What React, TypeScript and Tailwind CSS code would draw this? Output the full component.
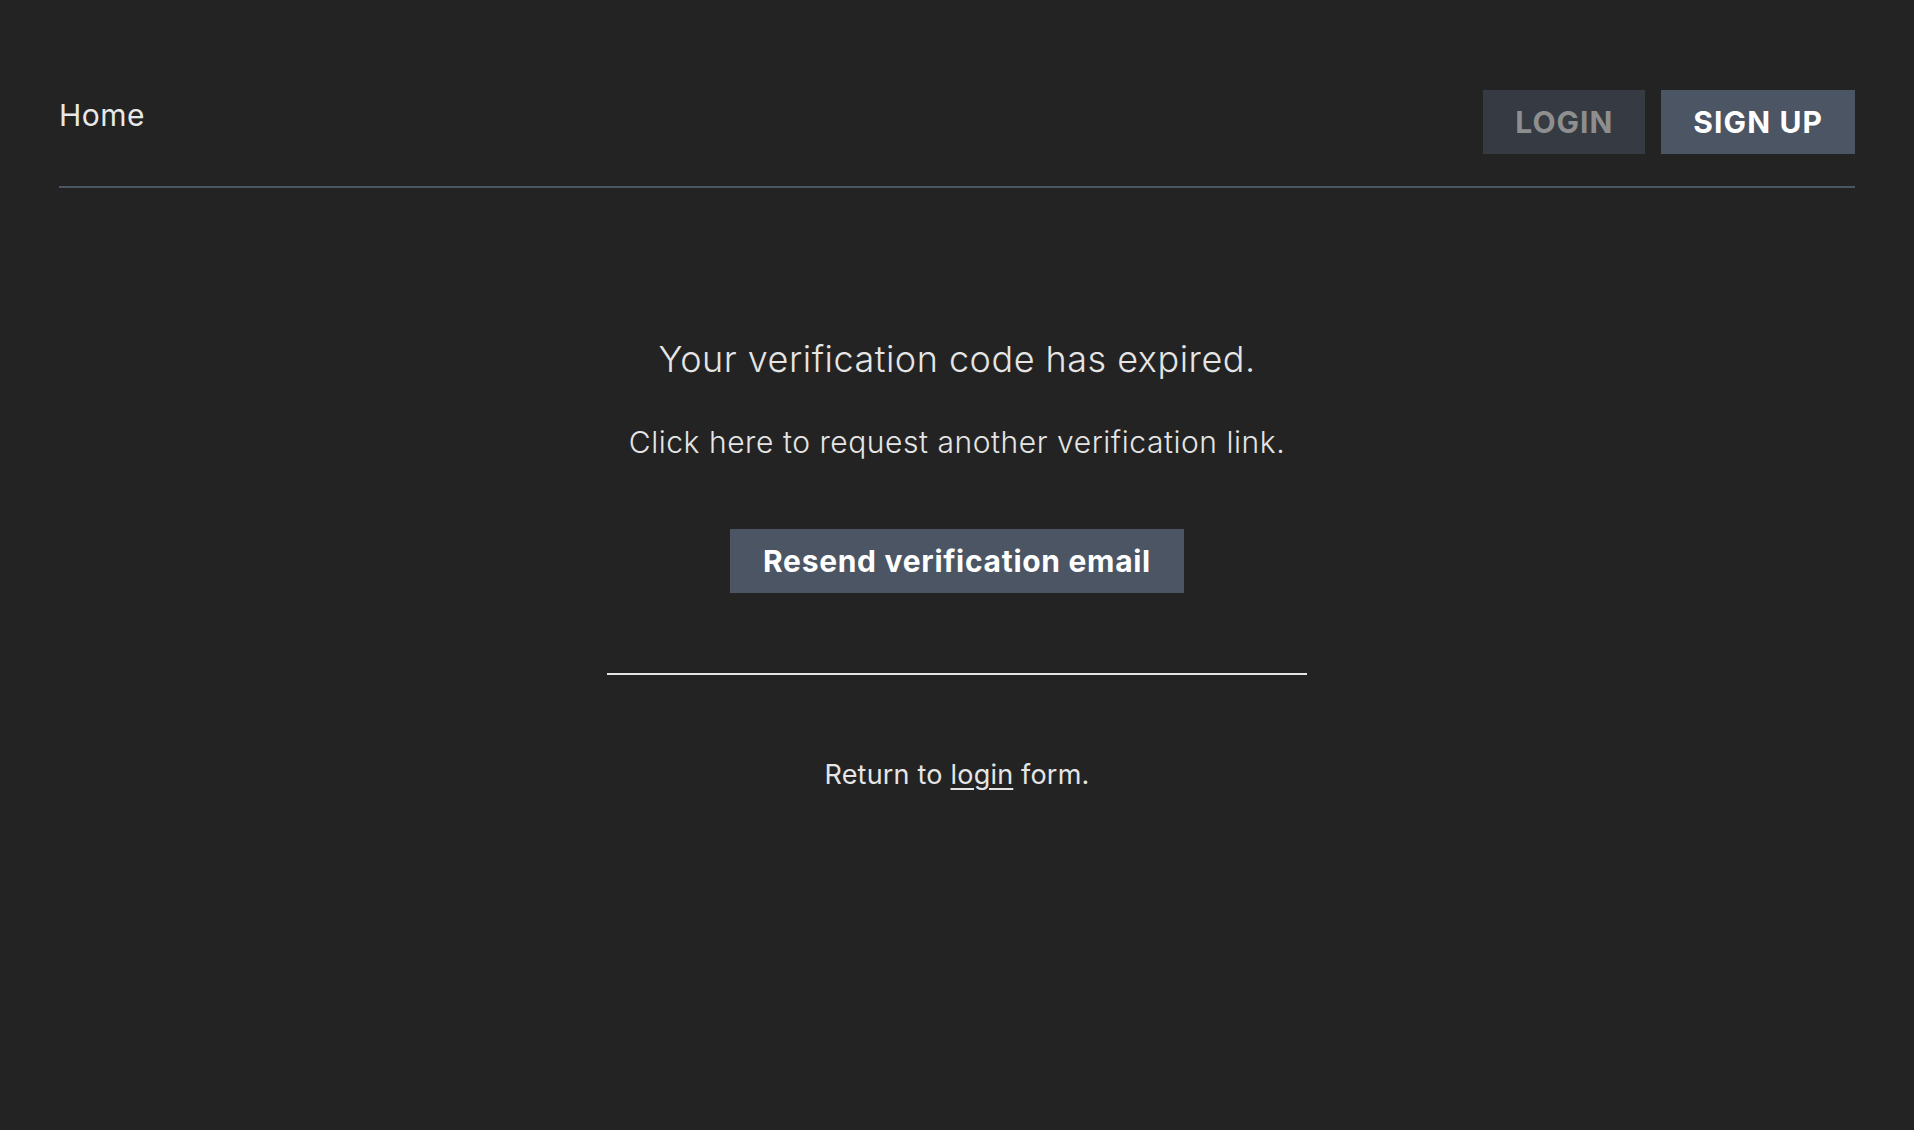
export default function App() {
    return (
        <div
            className="min-h-screen bg-[#232323] text-[#e5e5e5] px-[59px]"
            style={{ fontFamily: "Inter, 'Noto Sans', sans-serif" }}
        >
            <nav className="flex items-start justify-between pt-[90px] pb-8 border-b-2 border-[#4b5563]">
                <a href="#" className="mt-[7px] text-[30px] leading-[36px] tracking-[0.5px] text-[#e8e8e8]">
                    Home
                </a>
                <div className="flex gap-4">
                    <button className="h-16 px-8 flex items-center bg-[#363b43] text-[#8e8e8e] text-[30px] leading-[36px] font-bold tracking-[1px]">
                        LOGIN
                    </button>
                    <button className="h-16 px-8 flex items-center bg-[#4b5563] text-white text-[30px] leading-[36px] font-bold tracking-[1.1px]">
                        SIGN UP
                    </button>
                </div>
            </nav>

            <main className="flex flex-col items-center pt-[149px]">
                <h1 className="text-[36px] leading-[44px] font-light tracking-[0.5px]">
                    Your verification code has expired.
                </h1>
                <p className="mt-[43px] text-[30px] leading-[36px] font-light tracking-[0.55px]">
                    Click here to request another verification link.
                </p>
                <button className="mt-[69px] h-16 px-[33px] flex items-center bg-[#4b5563] text-white text-[30px] leading-[36px] font-bold tracking-[0.7px]">
                    Resend verification email
                </button>
                <div className="mt-[80px] w-[700px] h-[2px] bg-[#e5e5e5]" />
                <p className="mt-[84px] text-[27px] leading-[32px] tracking-[0.2px]">
                    Return to{" "}
                    <a href="#" className="underline underline-offset-4">
                        login
                    </a>{" "}
                    form.
                </p>
            </main>
        </div>
    );
}
